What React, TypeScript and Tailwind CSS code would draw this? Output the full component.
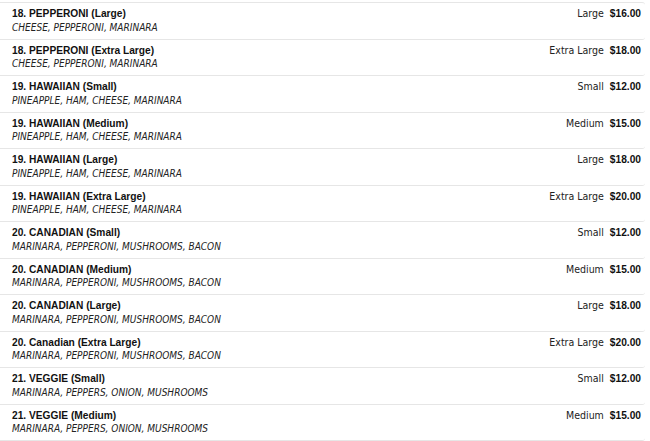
const items = [
  { name: "18. PEPPERONI (Large)", desc: "CHEESE, PEPPERONI, MARINARA", size: "Large", price: "$16.00" },
  { name: "18. PEPPERONI (Extra Large)", desc: "CHEESE, PEPPERONI, MARINARA", size: "Extra Large", price: "$18.00" },
  { name: "19. HAWAIIAN (Small)", desc: "PINEAPPLE, HAM, CHEESE, MARINARA", size: "Small", price: "$12.00" },
  { name: "19. HAWAIIAN (Medium)", desc: "PINEAPPLE, HAM, CHEESE, MARINARA", size: "Medium", price: "$15.00" },
  { name: "19. HAWAIIAN (Large)", desc: "PINEAPPLE, HAM, CHEESE, MARINARA", size: "Large", price: "$18.00" },
  { name: "19. HAWAIIAN (Extra Large)", desc: "PINEAPPLE, HAM, CHEESE, MARINARA", size: "Extra Large", price: "$20.00" },
  { name: "20. CANADIAN (Small)", desc: "MARINARA, PEPPERONI, MUSHROOMS, BACON", size: "Small", price: "$12.00" },
  { name: "20. CANADIAN (Medium)", desc: "MARINARA, PEPPERONI, MUSHROOMS, BACON", size: "Medium", price: "$15.00" },
  { name: "20. CANADIAN (Large)", desc: "MARINARA, PEPPERONI, MUSHROOMS, BACON", size: "Large", price: "$18.00" },
  { name: "20. Canadian (Extra Large)", desc: "MARINARA, PEPPERONI, MUSHROOMS, BACON", size: "Extra Large", price: "$20.00" },
  { name: "21. VEGGIE (Small)", desc: "MARINARA, PEPPERS, ONION, MUSHROOMS", size: "Small", price: "$12.00" },
  { name: "21. VEGGIE (Medium)", desc: "MARINARA, PEPPERS, ONION, MUSHROOMS", size: "Medium", price: "$15.00" },
];

export default function App() {
  return (
    <div className="w-[650px] h-[441px] overflow-hidden bg-white pt-[2px] text-[#111]">
      <div className="mr-[5px] border-t border-[#e6e6e6] rounded-tr-[3px]">
        {items.map((item) => (
          <div
            key={item.name}
            className="flex h-[36.5px] justify-between border-b border-[#e6e6e6] rounded-br-[3px] pl-[12px] pr-[4px]"
          >
            {/* Name + toppings */}
            <div className="pt-[4px]">
              <div className="font-['Liberation_Sans',sans-serif] text-[10.2px] font-bold leading-[13.5px]">
                {item.name}
              </div>
              <div className="font-['DejaVu_Sans_Condensed','DejaVu_Sans',sans-serif] text-[10px] italic leading-[14px] text-[#222]">
                {item.desc}
              </div>
            </div>

            {/* Size + price */}
            <div className="flex items-baseline gap-[6px] pt-[4px] leading-[13.5px]">
              <span className="font-['DejaVu_Sans_Condensed','DejaVu_Sans',sans-serif] text-[10.5px] text-[#222]">
                {item.size}
              </span>
              <span className="font-['Liberation_Sans',sans-serif] text-[10.2px] font-bold">
                {item.price}
              </span>
            </div>
          </div>
        ))}
      </div>
    </div>
  );
}
